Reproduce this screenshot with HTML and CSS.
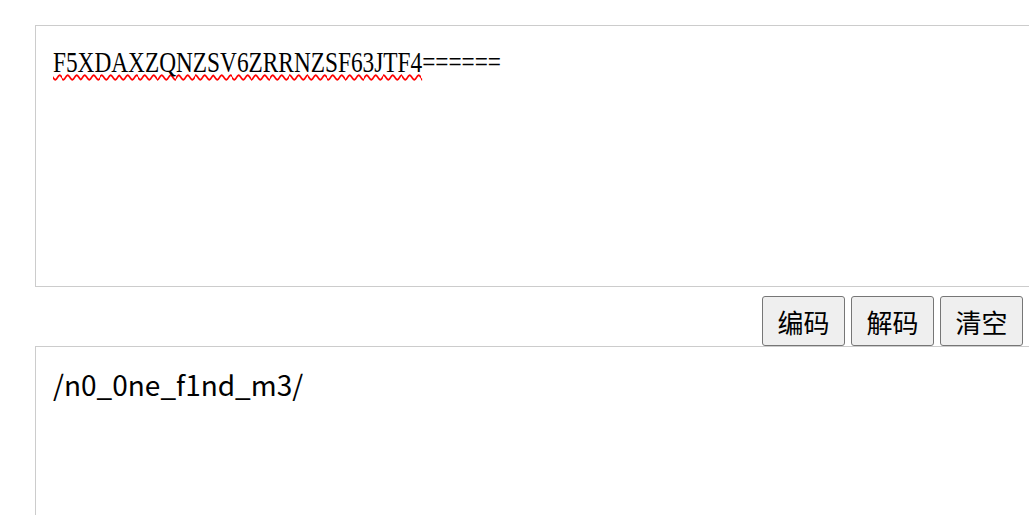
FILE: index.html
```html
<!DOCTYPE html>
<html lang="zh-CN">
<head>
    <meta charset="UTF-8">
    <meta name="viewport" content="width=device-width, initial-scale=1.0">
    <title>Base32 编码解码</title>
    <link rel="stylesheet" href="styles.css">
</head>
<body>
    <div class="page">
        <!-- input -->
        <div class="box input-box"><span class="mono"><span class="misspelled">F5XDAXZQNZSV6ZRRNZSF63JTF4</span>======</span></div>

        <!-- actions -->
        <div class="actions">
            <button class="btn">编码</button>
            <button class="btn">解码</button>
            <button class="btn">清空</button>
        </div>

        <!-- output -->
        <div class="box output-box">/n0_0ne_f1nd_m3/</div>
    </div>
</body>
</html>
```

FILE: styles.css
```css
html, body {
    margin: 0;
    overflow: hidden;
    background-color: white;
}

.page {
    padding: 25px 6px 0 35px;
}

.box {
    width: 1020px;
    border: 1px solid #cccccc;
    box-sizing: border-box;
    padding: 17px 17px;
    color: #000;
}

.input-box {
    height: 262px;
    padding-top: 20px;
    font-family: "Liberation Serif", serif;
    font-size: 30px;
    line-height: 32px;
}

.mono {
    display: inline-block;
    transform: scaleX(0.777);
    transform-origin: left center;
}

.misspelled {
    text-decoration: underline wavy red;
    text-decoration-thickness: 1.5px;
    text-decoration-skip-ink: none;
    text-underline-offset: 2px;
}

.actions {
    display: flex;
    justify-content: flex-end;
    gap: 6px;
    padding-top: 9px;
}

.btn {
    width: 83px;
    height: 50px;
    padding: 0;
    font-family: "Noto Sans CJK SC", sans-serif;
    font-size: 26px;
    color: #000;
    background-color: #efefef;
    border: 1px solid #767676;
    border-radius: 3px;
}

.output-box {
    height: 200px;
    font-family: "Noto Sans CJK SC", sans-serif;
    font-size: 28px;
    line-height: 40px;
    padding-top: 17px;
}
```
